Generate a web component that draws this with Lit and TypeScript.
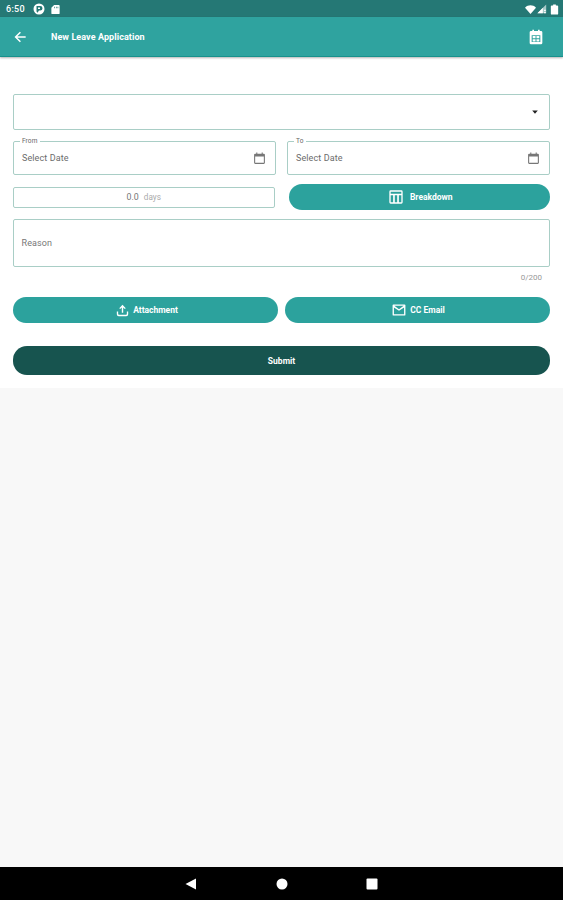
import { LitElement, html, css, svg } from "lit";
import { customElement, property } from "lit/decorators.js";

const icons: Record<string, unknown> = {
  back: svg`<path d="M20.500 10.800H8l5.400-5.300L11.800 4l-8 8 8 8 1.600-1.500L8 13.200h12.500z"/>`,
  calendar: svg`<path fill-rule="evenodd" d="M19.500 3h-2V1h-2.500v2H9V1H6.500v2h-2a2 2 0 0 0-2 2v16a2 2 0 0 0 2 2h15a2 2 0 0 0 2-2V5a2 2 0 0 0-2-2zM5.500 9.500h13v10h-13z"/><path d="M7 10.500h4.300v3.500H7zM12.700 10.500H17v3.500h-4.300zM7 15.300h4.300v3.500H7zM12.700 15.300H17v3.500h-4.300z"/>`,
  date: svg`<path fill-rule="evenodd" d="M20 3h-2V1h-2v2H8V1H6v2H4a2 2 0 0 0-2 2v15a2 2 0 0 0 2 2h16a2 2 0 0 0 2-2V5a2 2 0 0 0-2-2zM4 8.500h16v11.500H4z"/>`,
  table: svg`<path fill-rule="evenodd" d="M4 2h16a2 2 0 0 1 2 2v16a2 2 0 0 1-2 2H4a2 2 0 0 1-2-2V4a2 2 0 0 1 2-2zm0 2v3h16V4zm0 5.500v10.500h3.700V9.500zm6.200 0v10.500h3.600V9.500zm6.100 0v10.500H20V9.500z"/>`,
  upload: svg`<path d="M12 1.500L6 7.700 7.700 9.300l3-3V16h2.600V6.300l3 3L18 7.700zM1.500 14v5a3.500 3.500 0 0 0 3.500 3.500h14a3.500 3.500 0 0 0 3.500-3.500v-5H20v4.500a1.500 1.500 0 0 1-1.500 1.500h-13A1.500 1.500 0 0 1 4 18.500V14z"/>`,
  mail: svg`<path fill-rule="evenodd" d="M2.500 2.500h19A1.500 1.500 0 0 1 23 4v16a1.500 1.500 0 0 1-1.500 1.500h-19A1.500 1.500 0 0 1 1 20V4a1.500 1.500 0 0 1 1.500-1.500zM3.300 7.500v11.700h17.400V7.500L12 13.300zM4 4.800l8 5.700 8-5.700z"/>`,
  caret: svg`<path d="M3.500 7.500h17L12 17z"/>`,
  app: svg`<path fill-rule="evenodd" d="M12 1a11 11 0 1 0 0 22 11 11 0 0 0 0-22zM7 6h7.500a4.500 4.500 0 0 1 0 9H12l-3 4.500L7 17zm3 3v3h4V9z"/>`,
  sd: svg`<path fill-rule="evenodd" d="M9 2h10a2 2 0 0 1 2 2v16a2 2 0 0 1-2 2H5a2 2 0 0 1-2-2V8zm0 4v3h1.500V6zm4 0v3h1.500V6zm3.500 0v3H18V6z"/>`,
  wifi: svg`<path d="M12 22L0 8C7 1 17 1 24 8z"/>`,
  signal: svg`<path opacity=".6" d="M1 22L22 1v21z"/><path d="M1 22L14 9v13zM17 14h4v3h-4zM17 19h4v3h-4z"/>`,
  battery: svg`<path d="M9 1h6v2h3a2 2 0 0 1 2 2v16a2 2 0 0 1-2 2H6a2 2 0 0 1-2-2V5a2 2 0 0 1 2-2h3z"/>`,
  navBack: svg`<path d="M1 12L22 1v22z"/>`,
  navHome: svg`<circle cx="12" cy="12" r="11"/>`,
  navRecent: svg`<rect x="1" y="1" width="22" height="22" rx="2"/>`,
};

@customElement("ui-icon")
class UiIcon extends LitElement {
  @property() name = "";
  static styles = css`
    :host { display: block; flex: none; }
    svg { display: block; width: 100%; height: 100%; fill: currentColor; }
  `;
  render() {
    return html`<svg viewBox="0 0 24 24">${icons[this.name]}</svg>`;
  }
}

@customElement("date-field")
class DateField extends LitElement {
  @property() label = "";
  static styles = css`
    :host { display: block; }
    .field {
      position: relative; box-sizing: border-box; height: 34px; border: 1px solid #a9cec6;
      border-radius: 2px; display: flex; align-items: center; justify-content: space-between;
      padding: 0 9px 0 8px; color: #6c6c6c; font-size: 9px;
    }
    .label {
      position: absolute; left: 6px; top: -5px; padding: 0 3px 0 2px; background: #fff;
      font-size: 6.500px; line-height: 8px; color: #666; letter-spacing: 0.1px;
    }
    .value { letter-spacing: 0.1px; }
    .icon { width: 13px; height: 13px; color: #777; }
  `;
  render() {
    return html`<div class="field">
      <span class="label">${this.label}</span>
      <span class="value">Select Date</span>
      <ui-icon class="icon" name="date"></ui-icon>
    </div>`;
  }
}

@customElement("app-root")
class AppRoot extends LitElement {
  static styles = css`
    :host {
      display: flex; flex-direction: column; height: 900px; background: #f8f8f8;
      font-family: Roboto, "Liberation Sans", sans-serif; font-size: 8.500px; overflow: hidden;
    }
    .status {
      height: 17px; flex: none; box-sizing: border-box; background: #257875; color: #fff;
      display: flex; align-items: center; padding: 1px 3px 0 6px;
    }
    .time { font-size: 9px; width: 27px; letter-spacing: 0.3px; font-weight: 500; }
    .app { width: 12px; height: 12px; }
    .sd { width: 11px; height: 11px; margin-left: 5px; margin-right: auto; }
    .wifi { width: 11px; height: 11px; }
    .signal { width: 10px; height: 10px; margin-left: 1px; }
    .battery { width: 11px; height: 11px; margin-left: 2px; }
    .bar {
      height: 39.500px; flex: none; box-sizing: border-box; background: #2fa39f; color: #fff;
      display: flex; align-items: center; padding: 1px 19px 0 12px; border-bottom: 1px solid #17918c;
      box-shadow: 0 1px 2px rgba(0, 0, 0, 0.3); position: relative;
    }
    .back { width: 16px; height: 16px; }
    .title { margin-left: 23px; flex: 1; font-weight: 700; font-size: 9px; letter-spacing: 0.08px; }
    .calendar { width: 16px; height: 16px; }
    .form { height: 331.500px; flex: none; box-sizing: border-box; background: #fff; padding: 37.500px 13px 0; }
    .box { box-sizing: border-box; border: 1px solid #a9cec6; border-radius: 2px; display: flex; align-items: center; }
    .select { height: 36px; justify-content: flex-end; padding-right: 10px; color: #222; }
    .caret { width: 8px; height: 8px; }
    .row { display: grid; grid-template-columns: 1fr 1fr; }
    .dates { margin-top: 11px; column-gap: 11px; }
    .count { margin-top: 9.400px; column-gap: 14px; align-items: center; }
    .days { height: 21px; justify-content: center; gap: 5px; color: #777; font-size: 8.800px; }
    .unit { color: #aaa; font-size: 8.200px; }
    .btn {
      height: 26px; border-radius: 14px; background: #2ca29d; color: #fff; font-weight: 700;
      display: flex; align-items: center; justify-content: center; gap: 4px; font-size: 8.500px;
    }
    .btn ui-icon { width: 14px; height: 14px; }
    .upload ui-icon { width: 13px; height: 13px; }
    .upload { padding-left: 3px; }
    .email { padding-left: 2px; }
    .breakdown { gap: 6px; padding-left: 2px; }
    .breakdown ui-icon { width: 16px; height: 16px; }
    .reason { height: 48px; margin-top: 8.600px; padding-left: 7.500px; color: #777; font-size: 9px; letter-spacing: 0.1px; }
    .counter { text-align: right; margin: 6px 8px 0 0; font-size: 8px; line-height: 10px; color: #999; }
    .actions { margin-top: 14.500px; column-gap: 7px; }
    .submit { height: 28.500px; margin-top: 23px; background: #17544f; }
    .nav {
      margin-top: auto; height: 33px; flex: none; background: #000; color: #fff; box-sizing: border-box;
      display: flex; align-items: center; justify-content: center; gap: 78.300px;
    }
    .nav ui-icon { width: 12px; height: 12px; }
  `;
  render() {
    return html`
      <div class="status">
        <span class="time">6:50</span>
        <ui-icon class="app" name="app"></ui-icon>
        <ui-icon class="sd" name="sd"></ui-icon>
        <ui-icon class="wifi" name="wifi"></ui-icon>
        <ui-icon class="signal" name="signal"></ui-icon>
        <ui-icon class="battery" name="battery"></ui-icon>
      </div>
      <div class="bar">
        <ui-icon class="back" name="back"></ui-icon>
        <span class="title">New Leave Application</span>
        <ui-icon class="calendar" name="calendar"></ui-icon>
      </div>
      <div class="form">
        <div class="box select"><ui-icon class="caret" name="caret"></ui-icon></div>
        <div class="row dates">
          <date-field label="From"></date-field>
          <date-field label="To"></date-field>
        </div>
        <div class="row count">
          <div class="box days"><span>0.0</span><span class="unit">days</span></div>
          <div class="btn breakdown"><ui-icon name="table"></ui-icon><span>Breakdown</span></div>
        </div>
        <div class="box reason">Reason</div>
        <div class="counter">0/200</div>
        <div class="row actions">
          <div class="btn upload"><ui-icon name="upload"></ui-icon><span>Attachment</span></div>
          <div class="btn email"><ui-icon name="mail"></ui-icon><span>CC Email</span></div>
        </div>
        <div class="btn submit">Submit</div>
      </div>
      <div class="nav">
        <ui-icon name="navBack"></ui-icon>
        <ui-icon name="navHome"></ui-icon>
        <ui-icon name="navRecent"></ui-icon>
      </div>
    `;
  }
}
